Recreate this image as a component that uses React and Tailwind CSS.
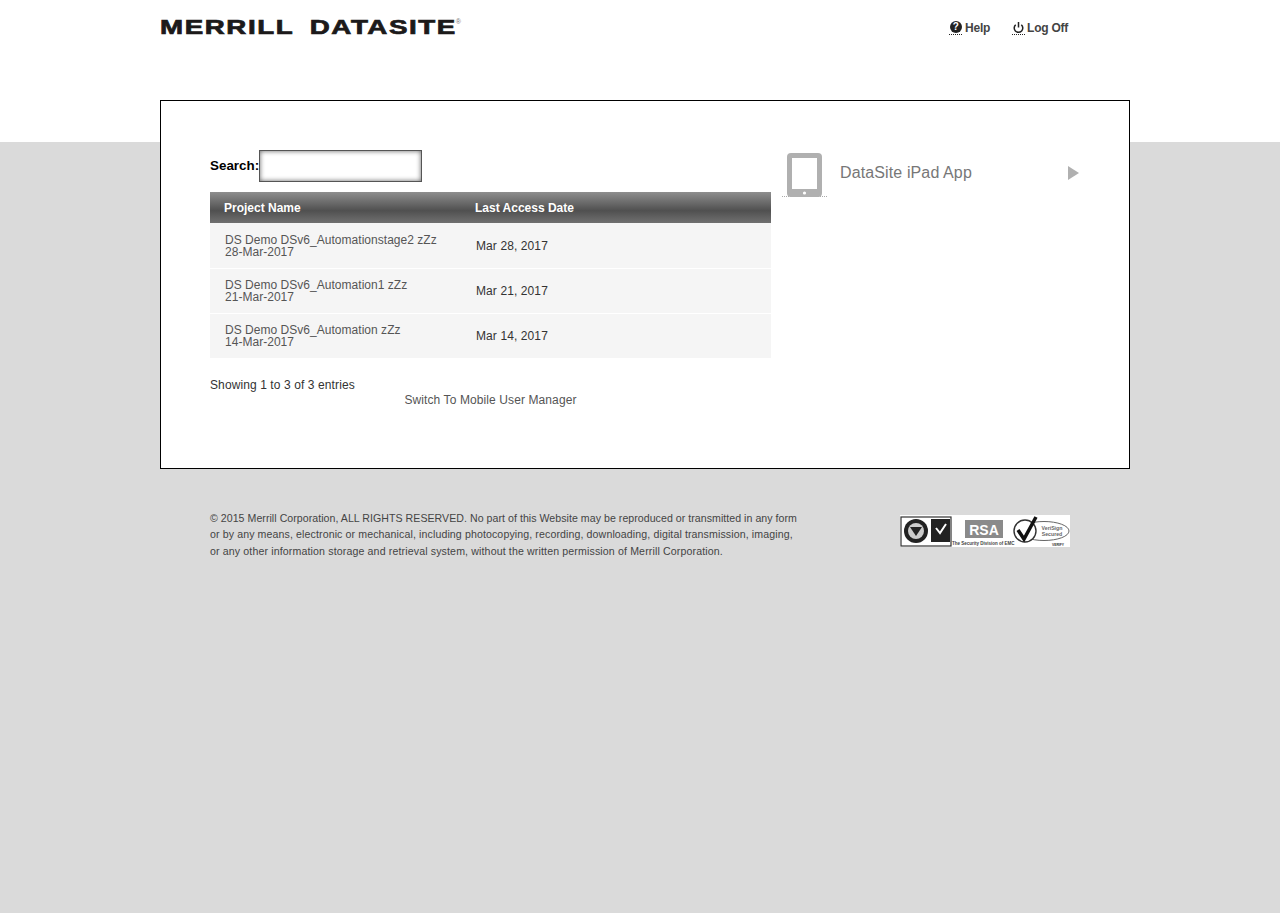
const rows = [
  ["DS Demo DSv6_Automationstage2 zZz", "28-Mar-2017", "Mar 28, 2017", "h-[45px]"],
  ["DS Demo DSv6_Automation1 zZz", "21-Mar-2017", "Mar 21, 2017", "h-[44px]"],
  ["DS Demo DSv6_Automation zZz", "14-Mar-2017", "Mar 14, 2017", "h-[44px]"],
];

function Seals() {
  return (
    <svg width="170" height="32" viewBox="0 0 170 32" className="block">
      <rect width="170" height="32" fill="#fff" />
      <rect x="1" y="2" width="50" height="29" fill="#fff" stroke="#333" strokeWidth="1.2" />
      <circle cx="16" cy="16" r="12" fill="#222" />
      <circle cx="16" cy="16" r="8" fill="#ccc" />
      <path d="M10 12h12l-6 9z" fill="#222" />
      <rect x="31" y="4" width="19" height="23" fill="#222" />
      <path d="M36 13l4 5 6-9" fill="none" stroke="#fff" strokeWidth="2" />
      <rect x="65" y="5" width="38" height="18" fill="#8a8a8a" />
      <text x="84" y="19.5" fontFamily="Liberation Sans, sans-serif" fontSize="14" fontWeight="700" fill="#fff" textAnchor="middle">RSA</text>
      <text x="52" y="30" fontFamily="Liberation Sans, sans-serif" fontSize="4.5" fontWeight="700" fill="#444">The Security Division of EMC</text>
      <ellipse cx="144" cy="16" rx="25" ry="9.5" fill="#fff" stroke="#666" />
      <circle cx="125" cy="16" r="11" fill="#fff" stroke="#333" strokeWidth="1.4" />
      <path d="M118 15l6 9 12-22" fill="none" stroke="#111" strokeWidth="3.5" />
      <text x="152" y="14.5" fontFamily="Liberation Sans, sans-serif" fontSize="5.2" fontWeight="700" fill="#666" textAnchor="middle">VeriSign</text>
      <text x="152" y="21" fontFamily="Liberation Sans, sans-serif" fontSize="5.2" fontWeight="700" fill="#666" textAnchor="middle">Secured</text>
      <text x="158" y="31" fontFamily="Liberation Sans, sans-serif" fontSize="3.4" fontWeight="700" fill="#333" textAnchor="middle">VERIFY</text>
    </svg>
  );
}

export default function App() {
  return (
    <div className="min-h-[913px] bg-[#dadada] font-['Liberation_Sans',Arial,sans-serif] text-[12px] text-[#444]">
      <header className="h-[142px] bg-white">
        <div className="ml-[160px] flex w-[908px] items-start justify-between pt-[17px]">
          <div className="flex h-[20px] w-[301px] items-start">
            <span className="block w-[296px] origin-left scale-x-[1.385] whitespace-nowrap text-[20px] font-bold leading-[20px] tracking-[1.15px] text-[#1c1a1a] [-webkit-text-stroke:0.7px_#1c1a1a] [word-spacing:-1.1px]">
              MERRILL&nbsp;&nbsp;DATASITE
            </span>
            <span className="mt-[1px] text-[7px] leading-[8px] text-[#777]">®</span>
          </div>
          <nav className="flex items-center gap-[22px] pt-[2px] text-[12px] font-bold tracking-[-0.25px] text-[#444]">
            <a className="flex items-center gap-[3px]">
              <span className="flex h-[14px] w-[13px] items-start justify-center border-b border-dotted border-[#222]">
                <span className="flex h-[12px] w-[12px] items-center justify-center rounded-full bg-[#222] text-[10px] leading-none text-white">?</span>
              </span>
              Help
            </a>
            <a className="flex items-center gap-[2px]">
              <span className="h-[14px] w-[13px] border-b border-dotted border-[#222]">
                <svg width="13" height="13" viewBox="0 0 13 13" fill="none" stroke="#222" strokeWidth="1.5">
                  <path d="M3.7 3.8a4.3 4.3 0 1 0 5.6 0" />
                  <path d="M6.5 1v5.5" />
                </svg>
              </span>
              Log Off
            </a>
          </nav>
        </div>
      </header>

      <main className="relative -mt-[42px] ml-[160px] flex h-[369px] w-[970px] border border-black bg-white pl-[49px] pt-[49px]">
        <section className="w-[561px]">
          <div className="flex h-[32px] items-center">
            <label className="mt-[1px] w-[49px] whitespace-nowrap text-[13.4px] font-bold text-black">Search:</label>
            <input className="h-[32px] w-[163px] border border-[#555] bg-white shadow-[inset_0_0_5px_#666] outline-none" />
          </div>
          <div className="mt-[10px] grid h-[31px] grid-cols-[265px_1fr] items-center bg-[linear-gradient(#8e8e8e,#505050_60%,#707070)] pl-[14px] font-bold text-white">
            <span>Project Name</span>
            <span className="-ml-[14px]">Last Access Date</span>
          </div>
          <div className="flex flex-col gap-px">
            {rows.map((r) => (
              <div key={r[0]} className={`grid grid-cols-[265px_1fr] items-center bg-[#f5f5f5] pl-[15px] ${r[3]}`}>
                <div className="leading-[12px] tracking-[0.03px] text-[#555]">
                  <div>{r[0]}</div>
                  <div>{r[1]}</div>
                </div>
                <div className="-ml-[14px] tracking-[0.1px] text-[#333]">{r[2]}</div>
              </div>
            ))}
          </div>
          <p className="mt-[20px] leading-[15px] tracking-[0.1px] text-[#333]">Showing 1 to 3 of 3 entries</p>
          <p className="text-center leading-[15px] tracking-[0.1px] text-[#555]">Switch To Mobile User Manager</p>
        </section>

        <aside className="ml-[11px] flex h-[47px] w-[297px] items-start">
          <div className="flex h-[47px] w-[45px] justify-center border-b border-dotted border-[#aaa] pt-[3px]">
            <svg width="35" height="44" viewBox="0 0 35 44">
              <rect width="35" height="44" rx="4" fill="#b0b0b0" />
              <rect x="5" y="5" width="25" height="31" fill="#fff" />
              <circle cx="17.5" cy="40" r="1.6" fill="#fff" />
            </svg>
          </div>
          <span className="ml-[13px] mt-[13px] flex-1 text-[16px] leading-[20px] tracking-[0.12px] text-[#777]">DataSite iPad App</span>
          <svg width="11" height="14" viewBox="0 0 11 14" className="mt-[16px]">
            <path d="M0 0l11 7-11 7z" fill="#b0b0b0" />
          </svg>
        </aside>
      </main>

      <footer className="ml-[210px] mt-[46px] flex w-[860px] items-start justify-between">
        <p className="-mt-[5px] w-[620px] text-[10.6px] leading-[16.4px] text-[#444]">
          <span className="block tracking-[0.04px]">© 2015 Merrill Corporation, ALL RIGHTS RESERVED. No part of this Website may be reproduced or transmitted in any form</span>
          <span className="block tracking-[0.11px]">or by any means, electronic or mechanical, including photocopying, recording, downloading, digital transmission, imaging,</span>
          <span className="block tracking-[0.136px]">or any other information storage and retrieval system, without the written permission of Merrill Corporation.</span>
        </p>
        <Seals />
      </footer>
    </div>
  );
}
